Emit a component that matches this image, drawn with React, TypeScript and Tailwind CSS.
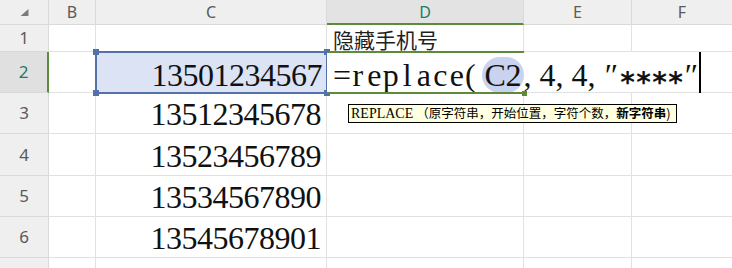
import React from "react";

const GREEN = "#5b8b3b";

function Ch({ c, w, left }: { c: string; w: string; left?: boolean }) {
  return (
    <span className={`inline-block ${w} ${left ? "text-left" : "text-center"}`}>{c}</span>
  );
}

export default function App() {
  const nums = ["13512345678", "13523456789", "13534567890", "13545678901"];
  const pre = "=replace(".split("");
  const post1 = [",", "4", ",", "4", ","];
  return (
    <div className="relative w-[732px] h-[268px] overflow-hidden bg-white" style={{ fontFamily: "'Noto Sans', 'Liberation Sans', sans-serif" }}>
      <div className="grid grid-cols-[49px_47px_231px_197px_108px_100px] grid-rows-[25px_27px_41px_41px_42px_41px_41px_41px]">
        {/* header row */}
        <div className="bg-[#efefef] border-r border-b border-[#dadada] flex items-start">
          <svg width="49" height="25" viewBox="0 0 49 25">
            <polygon points="29,9 29,16 21,16" fill="#7a7a7a" />
          </svg>
        </div>
        <div className="bg-[#efefef] border-r border-b border-[#dadada] flex items-center justify-center text-[16px] text-[#5a5a5a]">B</div>
        <div className="bg-[#efefef] border-r border-b border-[#dadada] flex items-center justify-center text-[16px] text-[#5a5a5a]">C</div>
        <div className="bg-[#e3e3e3] border-r border-[#dadada] border-b-2 border-b-[#5b8b3b] flex items-center justify-center text-[16px] text-[#217a68]">D</div>
        <div className="bg-[#efefef] border-r border-b border-[#dadada] flex items-center justify-center text-[16px] text-[#5a5a5a]">E</div>
        <div className="bg-[#efefef] border-b border-[#dadada] flex items-center justify-center text-[16px] text-[#5a5a5a]">F</div>

        {/* row 1 */}
        <div className="bg-[#efefef] border-r border-b border-[#dadada] flex items-center justify-center text-[17px] text-[#5a5a5a]">1</div>
        <div className="border-r border-b border-[#e1e1e1]" />
        <div className="border-r border-b border-[#e1e1e1]" />
        <div className="border-r border-b border-[#e1e1e1] flex items-end pl-[6px] text-[21px] leading-none text-[#1f1f1f]" style={{ fontFamily: "'Noto Sans CJK SC', sans-serif" }}>
          <span className="pb-[1px]">隐藏手机号</span>
        </div>
        <div className="border-r border-b border-[#e1e1e1]" />
        <div className="border-b border-[#e1e1e1]" />

        {/* row 2 */}
        <div className="bg-[#e0e0e0] border-b border-[#dadada] border-r-2 border-r-[#5b8b3b] flex items-center justify-center text-[17px] text-[#217a68]">2</div>
        <div className="border-r border-b border-[#e1e1e1]" />
        <div className="relative bg-[#dce3f5] flex items-end justify-end pr-[5px] pb-[2px] text-[32px] leading-none tracking-[-0.5px] text-[#111]" style={{ fontFamily: "'Liberation Serif', serif" }}>
          <span>13501234567</span>
          <div className="absolute left-[-1px] top-[-1px] right-[-1px] bottom-[-1px] border-2 border-[#5571a9]" />
          <div className="absolute left-[-3px] top-[-3px] w-[6px] h-[6px] bg-[#5571a9]" />
          <div className="absolute right-[-3px] top-[-3px] w-[6px] h-[6px] bg-[#5571a9]" />
          <div className="absolute left-[-3px] bottom-[-3px] w-[6px] h-[6px] bg-[#5571a9]" />
          <div className="absolute right-[-3px] bottom-[-3px] w-[6px] h-[6px] bg-[#5571a9]" />
        </div>
        <div className="relative z-10">
          <div className="absolute left-0 top-0 h-[40px] w-[373px] bg-white flex items-end pl-[6px] pb-[1px] text-[32px] leading-none text-[#111]" style={{ fontFamily: "'Liberation Serif', serif" }}>
            <div className="flex items-baseline">
              {pre.map((c, i) => (
                <Ch key={i} c={c} w="w-[16.5px]" left={c === "("} />
              ))}
              <span className="flex items-baseline rounded-full bg-[#c9d3ef] px-[3px] py-[2px] -my-[2px]">
                <Ch c="C" w="w-[21px]" />
                <Ch c="2" w="w-[15px]" />
              </span>
              {post1.map((c, i) => (
                <Ch key={i} c={c} w="w-[16px]" left={c === ","} />
              ))}
              <Ch c="″" w="w-[16px]" />
              {["*", "*", "*", "*"].map((c, i) => (
                <span key={i} className="relative top-[6px] inline-block w-[16px] text-center text-[28px] font-bold" style={{ fontFamily: "'DejaVu Sans', sans-serif" }}>{c}</span>
              ))}
              <Ch c="″" w="w-[16px]" />
            </div>
          </div>
          <div className="absolute left-0 top-[-1px] w-[197px] h-[2px]" style={{ backgroundColor: GREEN }} />
          <div className="absolute left-0 bottom-[-1px] w-[197px] h-[2px]" style={{ backgroundColor: GREEN }} />
          <div className="absolute left-[195px] bottom-[-3px] w-[5px] h-[5px]" style={{ backgroundColor: GREEN }} />
          <div className="absolute left-[372px] top-0 h-[41px] w-[2px] bg-black" />
        </div>
        <div className="border-r border-b border-[#e1e1e1]" />
        <div className="border-b border-[#e1e1e1]" />

        {/* rows 3-7 */}
        {nums.map((n, i) => (
          <React.Fragment key={n}>
            <div className="bg-[#efefef] border-r border-b border-[#dadada] flex items-center justify-center text-[17px] text-[#5a5a5a]">{i + 3}</div>
            <div className="border-r border-b border-[#e1e1e1]" />
            <div className="border-r border-b border-[#e1e1e1] flex items-end justify-end pr-[5px] pb-[3px] text-[32px] leading-none tracking-[-0.5px] text-[#111]" style={{ fontFamily: "'Liberation Serif', serif" }}>
              <span>{n}</span>
            </div>
            <div className="border-r border-b border-[#e1e1e1]" />
            <div className="border-r border-b border-[#e1e1e1]" />
            <div className="border-b border-[#e1e1e1]" />
          </React.Fragment>
        ))}
        <div className="bg-[#efefef] border-r border-[#dadada] flex items-center justify-center text-[17px] text-[#5a5a5a]">7</div>
        <div className="border-r border-[#e1e1e1]" />
        <div className="border-r border-[#e1e1e1]" />
        <div className="border-r border-[#e1e1e1]" />
        <div className="border-r border-[#e1e1e1]" />
        <div />
      </div>

      <div className="absolute left-[348px] top-[104px] w-[329px] h-[19px] border border-black bg-[#ffffe1] flex items-center pl-[2px] text-[12.5px] leading-none text-black whitespace-nowrap" style={{ fontFamily: "'Noto Sans CJK SC', sans-serif" }}>
        <span className="text-[14px] pr-[3px]" style={{ fontFamily: "'Liberation Serif', serif" }}>REPLACE</span>
        <span>（原字符串，开始位置，字符个数，</span>
        <span className="font-bold">新字符串</span>
        <span className="text-[13px]">)</span>
      </div>
    </div>
  );
}
